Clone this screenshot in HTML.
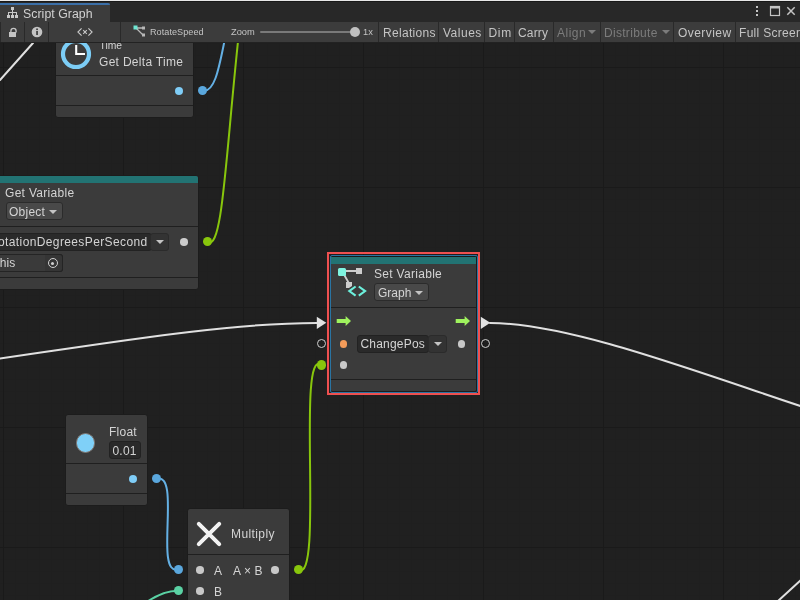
<!DOCTYPE html>
<html><head><meta charset="utf-8">
<style>
*{margin:0;padding:0;box-sizing:border-box}
html,body{width:800px;height:600px;overflow:hidden}
body{position:relative;background:#202020;font-family:"Liberation Sans",sans-serif;color:#d2d2d2}
.a{position:absolute}
#grid{left:0;top:0;width:800px;height:600px;
background-image:
linear-gradient(to right,#1a1a1a 1px,transparent 1px),
linear-gradient(to bottom,#1a1a1a 1px,transparent 1px),
linear-gradient(to right,#1f1f1f 1px,transparent 1px),
linear-gradient(to bottom,#1f1f1f 1px,transparent 1px);
background-size:120px 120px,120px 120px,12px 12px,12px 12px;
background-position:3px 0,0 67px,3px 0,0 7px;}
svg{position:absolute;left:0;top:0}
.node{position:absolute;background:#3b3b3b;border:1px solid #1c1c1c;border-radius:3px;overflow:hidden}
.sep{position:absolute;left:0;right:0;height:1px;background:#1f1f1f}
.teal{position:absolute;left:0;right:0;top:0;height:7px;background:#227373}
.t{position:absolute;font-size:12px;white-space:nowrap;line-height:14px;color:#d4d4d4}
.dd{position:absolute;background:#494949;border:1px solid #2b2b2b;border-radius:3px}
.fld{position:absolute;background:#2a2a2a;border:1px solid #222;border-radius:3px}
.dot{position:absolute;border-radius:50%}
.tri{position:absolute;width:0;height:0;border-left:4px solid transparent;border-right:4px solid transparent;border-top:4px solid #c4c4c4}
#tabs{left:0;top:0;width:800px;height:22px;background:#282828}
#toolbar{left:0;top:22px;width:800px;height:21px;background:#292929;border-bottom:1px solid #222}
.btn{position:absolute;top:0;height:20px;padding-top:1px;background:#3c3c3c;font-size:12px;color:#c4c4c4;line-height:20px;white-space:nowrap}
</style></head><body>
<div id="root" class="a" style="left:0;top:0;width:800px;height:600px;overflow:hidden;will-change:transform">
<div id="grid" class="a"></div>

<svg width="800" height="600" viewBox="0 0 800 600">
 <g fill="none" stroke-width="2" stroke-linecap="round">
  <!-- white flow edges -->
  <path d="M -344.6 390.3 C -105 390.3, 148.2 323, 317 323" stroke="#e0e0e0"/>
  <path d="M 490 323 C 623.7 323, 894.3 461.7, 1034 461.7" stroke="#e0e0e0"/>
  <path d="M 0 80 L 33 43" stroke="#e0e0e0"/>
  <path d="M 778 601 L 801 580" stroke="#e0e0e0"/>
  <!-- blue from get delta time -->
  <path d="M 202.75 90.6 C 216.3 93.4, 220.2 59.5, 226.7 30.6" stroke="#64b0e4"/>
  <!-- lime from get variable -->
  <path d="M 207.4 241.8 C 223.1 253, 225.6 151.1, 240.3 20.1" stroke="#88c60c"/>
  <!-- lime from multiply to set variable -->
  <path d="M 298.3 569.7 C 324.3 585.6, 295.9 344.7, 321.5 365" stroke="#88c60c"/>
  <!-- blue from float to multiply -->
  <path d="M 156.5 479 C 181.9 471.3, 153.4 576.2, 178.25 569.5" stroke="#64b0e4"/>
  <!-- teal to multiply B -->
  <path d="M 178.5 590.75 C 168 590.5, 157 595, 146 602.5" stroke="#5ad2a4"/>
 </g>
</svg>

<!-- Get Delta Time node -->
<div class="node" style="left:55px;top:20px;width:139px;height:98px">
  <div class="sep" style="top:54px"></div>
  <div class="sep" style="top:84px"></div>
  <svg width="40" height="40" style="left:4px;top:15px" viewBox="0 0 40 40">
    <circle cx="16" cy="18" r="13" fill="none" stroke="#7ccdf6" stroke-width="4.2"/>
    <path d="M16.2 9.1 V18 H25" fill="none" stroke="#fff" stroke-width="2.1"/>
  </svg>
  <div class="t" style="left:43.5px;top:18px;font-size:10.3px">Time</div>
  <div class="t" style="left:43px;top:34px;letter-spacing:0.3px">Get Delta Time</div>
  <div class="dot" style="left:119px;top:66px;width:8px;height:8px;background:#7fcdf7"></div>
</div>
<div class="dot" style="left:198px;top:86px;width:9px;height:9px;background:#5aa7dd"></div>

<!-- Get Variable node -->
<div class="node" style="left:-80px;top:175px;width:279px;height:115px">
  <div class="teal"></div>
  <div class="sep" style="top:50px"></div>
  <div class="sep" style="top:101px"></div>
  <div class="t" style="left:84px;top:10px;letter-spacing:0.3px">Get Variable</div>
  <div class="dd" style="left:85px;top:26px;width:57px;height:18px"></div>
  <div class="t" style="left:88px;top:29px;letter-spacing:0.25px">Object</div>
  <div class="tri" style="left:128px;top:34px"></div>
  <div class="fld" style="left:-2px;top:57px;width:233px;height:18px"></div>
  <div class="t" style="left:68px;top:59px;letter-spacing:0.38px">RotationDegreesPerSecond</div>
  <div class="dd" style="left:229px;top:57px;width:19px;height:18px;background:#333"></div>
  <div class="tri" style="left:234.5px;top:64px"></div>
  <div class="fld" style="left:-2px;top:78px;width:144px;height:18px;background:#3a3a3a;border-color:#242424"></div>
  <div class="dd" style="left:124px;top:78px;width:18px;height:18px;background:#353535;border-color:#242424;border-left:0;border-radius:0 3px 3px 0"></div>
  <div class="t" style="left:75.5px;top:80px">this</div>
  <div class="dot" style="left:126.9px;top:82px;width:10px;height:10px;border:1.4px solid #d0d0d0"></div>
  <div class="dot" style="left:130.4px;top:85.5px;width:3px;height:3px;background:#d0d0d0"></div>
  <div class="dot" style="left:259px;top:62px;width:7.5px;height:7.5px;background:#cccccc"></div>
</div>
<div class="dot" style="left:202.8px;top:237.2px;width:9.2px;height:9.2px;background:#88c60c"></div>

<!-- Set Variable node (selected) -->
<div class="a" style="left:327px;top:252px;width:153px;height:143px;border:2px solid #ef5050"></div>
<div class="node" style="left:330px;top:255px;width:147px;height:137px;border-radius:2px">
  <div class="teal" style="top:0;height:8px;border-top:1px solid #1a1a1a"></div>
  <div class="sep" style="top:51px"></div>
  <div class="sep" style="top:123px"></div>
  <svg width="40" height="45" style="left:0;top:0">
    <path d="M11 15 H28 M11 15 L17.5 26.5" stroke="#cdcdcd" stroke-width="1.8" fill="none"/>
    <rect x="7" y="12" width="8" height="8" rx="1.5" fill="#7ff3e0"/>
    <rect x="25" y="12" width="6" height="6" fill="#cdcdcd"/>
    <path d="M15 26 H21 V30 L18 32 H15 Z" fill="#cdcdcd"/>
    <path d="M24.6 30.5 L18.3 35.1 L24.6 39.7 M27.8 30.5 L34.1 35.1 L27.8 39.7" stroke="#6cf0dc" stroke-width="2.1" fill="none"/>
  </svg>
  <div class="t" style="left:43px;top:11px;letter-spacing:0.3px">Set Variable</div>
  <div class="dd" style="left:43px;top:27px;width:55px;height:18px"></div>
  <div class="t" style="left:47px;top:30px">Graph</div>
  <div class="tri" style="left:84px;top:35px"></div>
  <svg width="20" height="12" style="left:5px;top:59px"><path d="M0.7 6 H10" stroke="#9ff25e" stroke-width="4"/><path d="M9.6 1 L15 6 L9.6 11 Z" fill="#9ff25e"/></svg>
  <svg width="20" height="12" style="left:124px;top:59px"><path d="M0.7 6 H10" stroke="#9ff25e" stroke-width="4"/><path d="M9.6 1 L15 6 L9.6 11 Z" fill="#9ff25e"/></svg>
  <div class="dot" style="left:8.5px;top:84px;width:7.5px;height:7.5px;background:#f49c5a"></div>
  <div class="fld" style="left:26px;top:79px;width:72px;height:18px"></div>
  <div class="t" style="left:29.5px;top:81px;letter-spacing:0.2px">ChangePos</div>
  <div class="dd" style="left:97px;top:79px;width:19px;height:18px;background:#333"></div>
  <div class="tri" style="left:103px;top:86px"></div>
  <div class="dot" style="left:126.5px;top:84px;width:7.5px;height:7.5px;background:#c8c8c8"></div>
  <div class="dot" style="left:8.5px;top:105px;width:7.5px;height:7.5px;background:#c8c8c8"></div>
</div>
<div class="a" style="left:330px;top:255px;width:148px;height:138px;border:1px solid #2a74a2;border-radius:2px"></div>
<svg width="12" height="14" style="left:316px;top:316px"><path d="M0.8 0.8 L10.3 6.8 L0.8 12.9 Z" fill="#e2e2e2"/></svg>
<svg width="12" height="14" style="left:480px;top:316px"><path d="M0.8 0.8 L10.3 6.8 L0.8 12.9 Z" fill="#e2e2e2"/></svg>
<div class="dot" style="left:317px;top:339.3px;width:9px;height:9px;border:1px solid #cfcfcf"></div>
<div class="dot" style="left:481px;top:339.3px;width:9px;height:9px;border:1px solid #cfcfcf"></div>
<div class="dot" style="left:316.5px;top:360px;width:9.5px;height:9.5px;background:#88c60c"></div>

<!-- Float node -->
<div class="node" style="left:65px;top:414px;width:83px;height:92px">
  <div class="sep" style="top:48px"></div>
  <div class="sep" style="top:78px"></div>
  <div class="dot" style="left:9.5px;top:18.3px;width:19.6px;height:19.6px;background:#7fd0f8;border:1px solid #7d7570"></div>
  <div class="t" style="left:43px;top:10px;letter-spacing:0.25px">Float</div>
  <div class="fld" style="left:43px;top:26px;width:32px;height:18px"></div>
  <div class="t" style="left:46.5px;top:28.5px;letter-spacing:0.2px">0.01</div>
  <div class="dot" style="left:63px;top:60px;width:8px;height:8px;background:#7fcdf7"></div>
</div>
<div class="dot" style="left:152px;top:474px;width:9px;height:9px;background:#5aa7dd"></div>

<!-- Multiply node -->
<div class="node" style="left:187px;top:508px;width:103px;height:120px">
  <div class="sep" style="top:45px"></div>
  <svg width="32" height="32" style="left:6px;top:10px"><path d="M4.8 4.8 L25.2 25.2 M25.2 4.8 L4.8 25.2" stroke="#f2f2f2" stroke-width="4" stroke-linecap="round"/></svg>
  <div class="t" style="left:43px;top:18px;letter-spacing:0.4px">Multiply</div>
  <div class="dot" style="left:8px;top:57px;width:7.5px;height:7.5px;background:#c8c8c8"></div>
  <div class="t" style="left:26px;top:55px">A</div>
  <div class="t" style="left:45px;top:55px;letter-spacing:0.1px">A &#215; B</div>
  <div class="dot" style="left:83px;top:57px;width:7.5px;height:7.5px;background:#c8c8c8"></div>
  <div class="dot" style="left:8px;top:78px;width:7.5px;height:7.5px;background:#c8c8c8"></div>
  <div class="t" style="left:26px;top:76px">B</div>
</div>
<div class="dot" style="left:173.5px;top:565px;width:9px;height:9px;background:#5aa7dd"></div>
<div class="dot" style="left:173.5px;top:586px;width:9px;height:9px;background:#5ad2a4"></div>
<div class="dot" style="left:294px;top:565px;width:9px;height:9px;background:#88c60c"></div>

<!-- Tabs / Toolbar -->
<div id="tabs" class="a">
  <div class="a" style="left:0;top:0;width:800px;height:1px;background:#e8e8e8"></div>
  <div class="a" style="left:0;top:1px;width:800px;height:1px;background:#191919"></div>
  <div class="a" style="left:0;top:3px;width:110px;height:19px;background:#3c3c3c"></div>
  <div class="a" style="left:0;top:3px;width:110px;height:2px;background:#3b6fa8;border-radius:0 2px 0 0"></div>
  <svg width="14" height="14" style="left:6px;top:6px"><path d="M6.5 3 V6 M2.5 6.5 H10.5 M2.5 6 V9 M6.5 6 V9 M10.5 6 V9" stroke="#c8c8c8" stroke-width="1" fill="none"/><rect x="5" y="1" width="3" height="3" fill="#c8c8c8"/><rect x="1" y="9" width="3" height="3" fill="#c8c8c8"/><rect x="5" y="9" width="3" height="3" fill="#c8c8c8"/><rect x="9" y="9" width="3" height="3" fill="#c8c8c8"/></svg>
  <div class="t" style="left:23px;top:7px;font-size:12.3px;line-height:15px;color:#d2d2d2;letter-spacing:0.05px">Script Graph</div>
</div>
<div id="toolbar" class="a">
  <div class="btn" style="left:1px;width:23px"><svg width="23" height="20" style="left:0;top:0"><path d="M9.9 10.5 V9 A2.6 2.6 0 0 1 15.1 9 V10.5" fill="none" stroke="#c4c4c4" stroke-width="1.3"/><rect x="8" y="10" width="7" height="5" fill="#c4c4c4"/></svg></div>
  <div class="btn" style="left:25px;width:23px"><svg width="23" height="20" style="left:0;top:0"><circle cx="12" cy="10" r="5.3" fill="#c4c4c4"/><rect x="11.2" y="9" width="1.7" height="4" fill="#3c3c3c"/><rect x="11.2" y="6.5" width="1.7" height="1.6" fill="#3c3c3c"/></svg></div>
  <div class="btn" style="left:49px;width:71px"><svg width="71" height="20" style="left:0;top:0"><path d="M32.6 6.3 L28.9 10 L32.6 13.7 M39.4 6.3 L43.1 10 L39.4 13.7 M34.2 8.2 L37.8 11.8 M37.8 8.2 L34.2 11.8" fill="none" stroke="#c8c8c8" stroke-width="1.1"/></svg></div>
  <div class="btn" style="left:121px;width:257px">
    <svg width="20" height="20" style="left:10px;top:0"><path d="M5 6 H12 M5 6 L12 13" stroke="#b8b8b8" stroke-width="1.3" fill="none"/><rect x="2.5" y="3.5" width="4" height="4" fill="#6ee6d2"/><rect x="11" y="4.5" width="3" height="3" fill="#b8b8b8"/><rect x="11" y="11.5" width="3" height="3" fill="#b8b8b8"/></svg>
    <div class="a" style="left:29px;top:0px;font-size:9.1px;letter-spacing:0.05px">RotateSpeed</div>
    <div class="a" style="left:110px;top:0px;font-size:9.3px">Zoom</div>
    <div class="a" style="left:139px;top:9px;width:95px;height:2px;background:#7a7a7a;border-radius:1px"></div>
    <div class="a" style="left:229px;top:5px;width:10px;height:10px;background:#c0c0c0;border-radius:50%"></div>
    <div class="a" style="left:242px;top:0px;font-size:9.3px">1x</div>
  </div>
  <div class="btn" style="left:379px;width:59px;padding-left:4px;letter-spacing:0.3px">Relations</div>
  <div class="btn" style="left:439px;width:45px;padding-left:4px;letter-spacing:0.5px">Values</div>
  <div class="btn" style="left:485px;width:29px;padding-left:3.5px;letter-spacing:0.7px">Dim</div>
  <div class="btn" style="left:515px;width:38px;padding-left:3px;letter-spacing:0.15px">Carry</div>
  <div class="btn" style="left:554px;width:46px;padding-left:3px;color:#7c7c7c;letter-spacing:0.5px">Align<i class="tri" style="left:34px;top:8px;border-top-color:#7c7c7c"></i></div>
  <div class="btn" style="left:601px;width:72px;padding-left:3px;color:#7c7c7c;letter-spacing:0.3px">Distribute<i class="tri" style="left:61px;top:8px;border-top-color:#7c7c7c"></i></div>
  <div class="btn" style="left:674px;width:61px;padding-left:4px;letter-spacing:0.45px">Overview</div>
  <div class="btn" style="left:736px;width:70px;padding-left:3px;letter-spacing:0.3px">Full Screen</div>
</div>
<div class="a" style="left:756px;top:6px;width:2px;height:2px;background:#c4c4c4;box-shadow:0 4px #c4c4c4,0 8px #c4c4c4"></div>
<svg width="60" height="22" style="left:740px;top:0"><rect x="30.5" y="6.5" width="9" height="9" fill="none" stroke="#c4c4c4" stroke-width="1.2"/><rect x="30.5" y="6.5" width="9" height="2" fill="#c4c4c4"/><path d="M47.3 7.3 L54.7 14.7 M54.7 7.3 L47.3 14.7" stroke="#c4c4c4" stroke-width="1.5"/></svg>
</div>
</body></html>
